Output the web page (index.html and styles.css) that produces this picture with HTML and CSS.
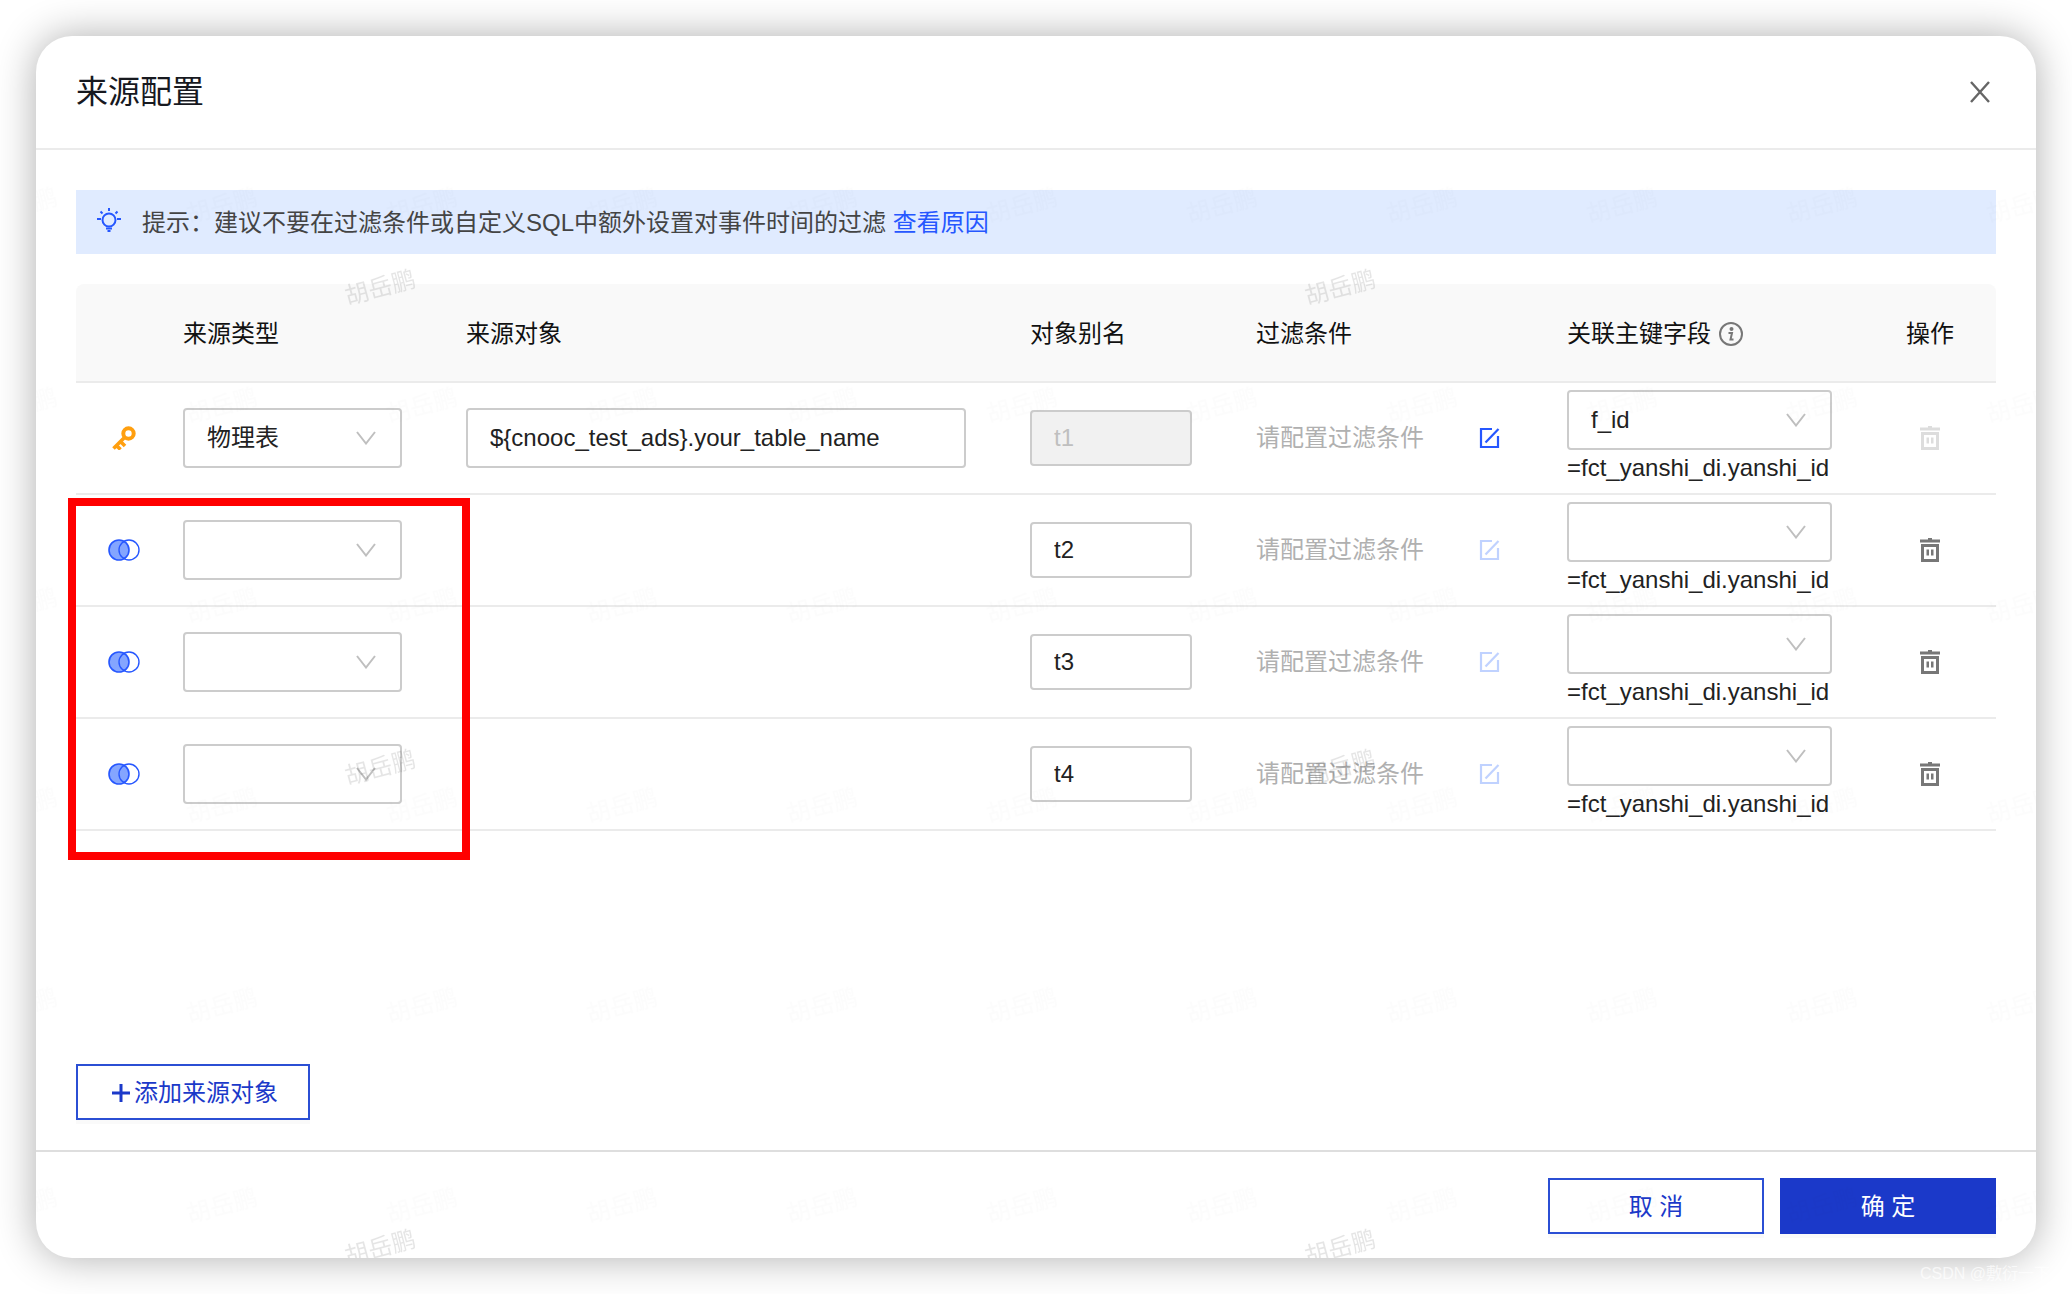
FILE: index.html
```html
<!DOCTYPE html>
<html lang="zh-CN">
<head>
  <meta charset="UTF-8" />
  <title>来源配置</title>
  <meta name="viewport" content="width=device-width, initial-scale=1" />
  <link rel="stylesheet" href="styles.css">
</head>
<body>
  <svg class="icon-defs" aria-hidden="true">
    <symbol id="icon-down" viewBox="0 0 20 14">
      <path d="M1 1l9 11.5L19 1" fill="none" stroke="currentColor" stroke-width="2" />
    </symbol>
    <symbol id="icon-key" viewBox="0 0 24 24">
      <circle cx="16.5" cy="7.5" r="5.2" fill="none" stroke="currentColor" stroke-width="4" />
      <path d="M12.5 11.5L1.500 22.500M8.500 15.500l4.500 4.500M4.500 19.500l4 4" fill="none" stroke="currentColor" stroke-width="3.6" />
    </symbol>
    <symbol id="icon-join" viewBox="0 0 32 22">
      <circle cx="11" cy="11" r="10" fill="#84a5ff" stroke="#2657ff" stroke-width="1.6" />
      <circle cx="21" cy="11" r="10" fill="none" stroke="#2657ff" stroke-width="1.4" />
    </symbol>
    <symbol id="icon-edit" viewBox="0 0 22 22">
      <path d="M13 2H2v18h17V9" fill="none" stroke="currentColor" stroke-width="2.2" />
      <path d="M6.500 15.500L19.500 2" fill="none" stroke="currentColor" stroke-width="2.2" />
    </symbol>
    <symbol id="icon-trash" viewBox="0 0 20 24">
      <path d="M0 1.500h8V0h4v1.500h8v3H0z" fill="currentColor" />
      <path d="M2.500 7.500h15v15h-15z" fill="none" stroke="currentColor" stroke-width="3" />
      <path d="M6.500 11.500h2.500v6H6.500zM11 11.500h2.500v6H11z" fill="currentColor" />
    </symbol>
  </svg>

  <div class="modal">
    <div class="modal-header">
      <h1>来源配置</h1>
      <button class="close-btn" aria-label="关闭">
        <svg width="20" height="22" viewBox="0 0 20 22"><path d="M1 1l18 20M19 1L1 21" stroke="currentColor" stroke-width="2.4" /></svg>
      </button>
    </div>

    <div class="modal-body">
      <div class="notice">
        <svg class="bulb" width="24" height="24" viewBox="0 0 24 24" fill="none" stroke="currentColor" stroke-width="2">
          <circle cx="12" cy="12" r="6.500" />
          <path d="M12 0v3M3.500 3.500l2 2M20.500 3.500l-2 2M0 11h4M20 11h4" />
          <path d="M9 20.500h6M10.500 23h3" />
        </svg>
        <span>提示：建议不要在过滤条件或自定义SQL中额外设置对事件时间的过滤 <a href="#">查看原因</a></span>
      </div>

      <div class="table-wrap">
        <table class="source-table">
          <colgroup>
            <col class="col-icon">
            <col class="col-type">
            <col>
            <col class="col-alias">
            <col class="col-filter">
            <col class="col-key">
            <col class="col-action">
          </colgroup>
          <thead>
            <tr>
              <th></th>
              <th>来源类型</th>
              <th>来源对象</th>
              <th>对象别名</th>
              <th>过滤条件</th>
              <th>
                <div class="th-info">
                  关联主键字段
                  <svg width="24" height="24" viewBox="0 0 24 24">
                    <circle cx="12" cy="12" r="11" fill="none" stroke="currentColor" stroke-width="2" />
                    <circle cx="12.500" cy="7" r="2" fill="currentColor" />
                    <path d="M9.500 11h3.500l-1.500 6.500h3" fill="none" stroke="currentColor" stroke-width="2" />
                  </svg>
                </div>
              </th>
              <th>操作</th>
            </tr>
          </thead>
          <tbody>
            <tr>
              <td class="cell-icon"><svg class="key" width="24" height="24"><use href="#icon-key" /></svg></td>
              <td>
                <div class="select">
                  <select aria-label="来源类型"><option>物理表</option></select>
                  <svg width="20" height="14"><use href="#icon-down" /></svg>
                </div>
              </td>
              <td><input class="object" type="text" aria-label="来源对象" value="${cnooc_test_ads}.your_table_name"></td>
              <td><input type="text" aria-label="对象别名" value="t1" disabled></td>
              <td class="cell-filter">
                <div class="filter">
                  <span>请配置过滤条件</span>
                  <button class="icon-btn edit" aria-label="编辑"><svg width="22" height="22"><use href="#icon-edit" /></svg></button>
                </div>
              </td>
              <td class="cell-key">
                <div class="select">
                  <select aria-label="关联主键字段"><option>f_id</option></select>
                  <svg width="20" height="14"><use href="#icon-down" /></svg>
                </div>
                <div class="key-target">=fct_yanshi_di.yanshi_id</div>
              </td>
              <td class="cell-action"><button class="icon-btn" aria-label="删除" disabled><svg width="20" height="24"><use href="#icon-trash" /></svg></button></td>
            </tr>
            <tr>
              <td class="cell-icon"><svg width="32" height="22"><use href="#icon-join" /></svg></td>
              <td>
                <div class="select">
                  <select aria-label="来源类型"><option></option></select>
                  <svg width="20" height="14"><use href="#icon-down" /></svg>
                </div>
              </td>
              <td></td>
              <td><input type="text" aria-label="对象别名" value="t2"></td>
              <td class="cell-filter">
                <div class="filter">
                  <span>请配置过滤条件</span>
                  <button class="icon-btn edit" aria-label="编辑" disabled><svg width="22" height="22"><use href="#icon-edit" /></svg></button>
                </div>
              </td>
              <td class="cell-key">
                <div class="select">
                  <select aria-label="关联主键字段"><option></option></select>
                  <svg width="20" height="14"><use href="#icon-down" /></svg>
                </div>
                <div class="key-target">=fct_yanshi_di.yanshi_id</div>
              </td>
              <td class="cell-action"><button class="icon-btn" aria-label="删除"><svg width="20" height="24"><use href="#icon-trash" /></svg></button></td>
            </tr>
            <tr>
              <td class="cell-icon"><svg width="32" height="22"><use href="#icon-join" /></svg></td>
              <td>
                <div class="select">
                  <select aria-label="来源类型"><option></option></select>
                  <svg width="20" height="14"><use href="#icon-down" /></svg>
                </div>
              </td>
              <td></td>
              <td><input type="text" aria-label="对象别名" value="t3"></td>
              <td class="cell-filter">
                <div class="filter">
                  <span>请配置过滤条件</span>
                  <button class="icon-btn edit" aria-label="编辑" disabled><svg width="22" height="22"><use href="#icon-edit" /></svg></button>
                </div>
              </td>
              <td class="cell-key">
                <div class="select">
                  <select aria-label="关联主键字段"><option></option></select>
                  <svg width="20" height="14"><use href="#icon-down" /></svg>
                </div>
                <div class="key-target">=fct_yanshi_di.yanshi_id</div>
              </td>
              <td class="cell-action"><button class="icon-btn" aria-label="删除"><svg width="20" height="24"><use href="#icon-trash" /></svg></button></td>
            </tr>
            <tr>
              <td class="cell-icon"><svg width="32" height="22"><use href="#icon-join" /></svg></td>
              <td>
                <div class="select">
                  <select aria-label="来源类型"><option></option></select>
                  <svg width="20" height="14"><use href="#icon-down" /></svg>
                </div>
              </td>
              <td></td>
              <td><input type="text" aria-label="对象别名" value="t4"></td>
              <td class="cell-filter">
                <div class="filter">
                  <span>请配置过滤条件</span>
                  <button class="icon-btn edit" aria-label="编辑" disabled><svg width="22" height="22"><use href="#icon-edit" /></svg></button>
                </div>
              </td>
              <td class="cell-key">
                <div class="select">
                  <select aria-label="关联主键字段"><option></option></select>
                  <svg width="20" height="14"><use href="#icon-down" /></svg>
                </div>
                <div class="key-target">=fct_yanshi_di.yanshi_id</div>
              </td>
              <td class="cell-action"><button class="icon-btn" aria-label="删除"><svg width="20" height="24"><use href="#icon-trash" /></svg></button></td>
            </tr>
          </tbody>
        </table>
        <div class="highlight"></div>
      </div>

      <button class="btn add-btn">
        <svg width="18" height="18" viewBox="0 0 18 18"><path d="M9 0v18M0 9h18" stroke="currentColor" stroke-width="3" /></svg>
        添加来源对象
      </button>
    </div>

    <div class="modal-footer">
      <button class="btn">取 消</button>
      <button class="btn primary">确 定</button>
    </div>

    <svg class="watermark" width="100%" height="100%" aria-hidden="true">
      <defs>
        <pattern id="mark-small" width="200" height="200" patternUnits="userSpaceOnUse">
          <text class="mark-faint" x="186" y="178" text-anchor="middle" transform="rotate(-15 186 170)">胡岳鹏</text>
          <text class="mark-faint" x="-14" y="178" text-anchor="middle" transform="rotate(-15 -14 170)">胡岳鹏</text>
        </pattern>
        <pattern id="mark-large" width="960" height="480" patternUnits="userSpaceOnUse">
          <text class="mark-dark" x="344" y="260" text-anchor="middle" transform="rotate(-15 344 251)">胡岳鹏</text>
        </pattern>
      </defs>
      <rect y="112" width="100%" height="100%" fill="url(#mark-small)" />
      <rect width="100%" height="100%" fill="url(#mark-large)" />
    </svg>
  </div>
  <div class="credit">CSDN @敷衍一下</div>
</body>
</html>
```
FILE: styles.css
```css
* {
  box-sizing: border-box;
}

body {
  margin: 0;
  padding: 36px;
  min-height: 100vh;
  display: flex;
  position: relative;
  overflow: hidden;
  background: #fff;
  color: #222;
  font-family: "Liberation Sans", "Noto Sans CJK SC", sans-serif;
  font-size: 24px;
  line-height: 36px;
}

button,
input,
select {
  font: inherit;
  color: inherit;
}

button {
  cursor: pointer;
}

.icon-defs {
  position: absolute;
  width: 0;
  height: 0;
}

.modal {
  position: relative;
  flex: 1;
  display: flex;
  flex-direction: column;
  background: #fff;
  border-radius: 36px;
  box-shadow: 0 0 40px rgba(0, 0, 0, 0.32);
  overflow: hidden;
}

.modal-header {
  display: flex;
  align-items: center;
  justify-content: space-between;
  height: 114px;
  padding: 0 40px;
  border-bottom: 2px solid #ebebeb;
}

.modal-header h1 {
  margin: 0;
  font-size: 32px;
  font-weight: 400;
  color: #17191f;
}

.close-btn {
  display: flex;
  padding: 6px;
  border: none;
  background: none;
  color: #666;
}

.modal-body {
  flex: 1;
  display: flex;
  flex-direction: column;
  padding: 40px 40px 30px;
}

.notice {
  display: flex;
  align-items: center;
  gap: 21px;
  height: 64px;
  padding: 2px 21px 0;
  background: #e0ebff;
  color: #444;
}

.notice .bulb {
  color: #2657ff;
  margin-bottom: 6px;
}

.notice a {
  color: #2657ff;
  text-decoration: none;
}

.table-wrap {
  position: relative;
  margin-top: 30px;
}

.source-table {
  width: 100%;
  table-layout: fixed;
  border-collapse: separate;
  border-spacing: 0;
}

.col-icon { width: 107px; }
.col-type { width: 283px; }
.col-alias { width: 226px; }
.col-filter { width: 311px; }
.col-key { width: 339px; }
.col-action { width: 90px; }

.source-table th {
  height: 99px;
  padding: 2px 0 0;
  background: #f9f9f9;
  border-bottom: 2px solid #ebebeb;
  color: #111;
  font-weight: 400;
  text-align: left;
}

.source-table th:first-child {
  border-top-left-radius: 8px;
}

.source-table th:last-child {
  border-top-right-radius: 8px;
}

.source-table td {
  height: 112px;
  padding: 0 64px 0 0;
  border-bottom: 2px solid #ebebeb;
}

.th-info {
  display: flex;
  align-items: center;
  gap: 8px;
}

.th-info svg {
  color: #777;
}

.source-table .cell-icon {
  padding: 0 12px 0 0;
  text-align: center;
}

.source-table .cell-filter {
  padding-right: 66px;
}

.source-table .cell-key {
  padding-right: 74px;
}

.source-table .cell-action {
  padding: 0 0 0 14px;
}

td svg {
  display: block;
}

.cell-icon svg {
  margin: 0 auto;
}

.key {
  color: #ff9f0f;
}

input {
  display: block;
  width: 100%;
  height: 56px;
  padding: 0 22px;
  border: 2px solid #ccc;
  border-radius: 4px;
  background: #fff;
}

input.object {
  height: 60px;
}

input:disabled {
  background: #f1f1f1;
  color: #bfbfbf;
}

.select {
  position: relative;
}

.select select {
  display: block;
  appearance: none;
  width: 100%;
  height: 60px;
  padding: 0 60px 0 22px;
  border: 2px solid #ccc;
  border-radius: 4px;
  background: #fff;
}

.select svg {
  position: absolute;
  right: 26px;
  top: 23px;
  color: #bfbfbf;
  pointer-events: none;
}

.filter {
  display: flex;
  align-items: center;
  justify-content: space-between;
  color: #b0b0b0;
  white-space: nowrap;
}

.icon-btn {
  display: block;
  padding: 0;
  border: none;
  background: none;
  color: #777;
}

.icon-btn:disabled {
  color: #ddd;
}

.icon-btn.edit {
  color: #2657ff;
}

.icon-btn.edit:disabled {
  color: #c0d2ff;
}

.highlight {
  position: absolute;
  left: -8px;
  top: 214px;
  width: 402px;
  height: 362px;
  border: 8px solid #f00;
  pointer-events: none;
}

.btn {
  height: 56px;
  width: 216px;
  padding: 2px 0 0;
  border: 2px solid #2b4fd4;
  background: #fff;
  color: #1b39c9;
  box-shadow: 0 4px 0 rgba(0, 0, 0, 0.02);
}

.btn.primary {
  border-color: #1b39c9;
  background: #1b39c9;
  color: #fff;
}

.add-btn {
  display: flex;
  align-items: center;
  justify-content: center;
  gap: 4px;
  width: 234px;
  margin-top: auto;
  padding-left: 4px;
}

.modal-footer {
  display: flex;
  justify-content: flex-end;
  gap: 16px;
  padding: 26px 40px 24px;
  border-top: 2px solid #dedede;
}

.watermark {
  position: absolute;
  inset: 0;
  pointer-events: none;
}

.mark-faint {
  fill: rgba(0, 0, 0, 0.01);
}

.mark-dark {
  fill: rgba(0, 0, 0, 0.1);
}

.credit {
  position: absolute;
  right: 22px;
  bottom: 10px;
  color: rgba(255, 255, 255, 0.7);
  font-size: 16px;
  line-height: 20px;
}
```
